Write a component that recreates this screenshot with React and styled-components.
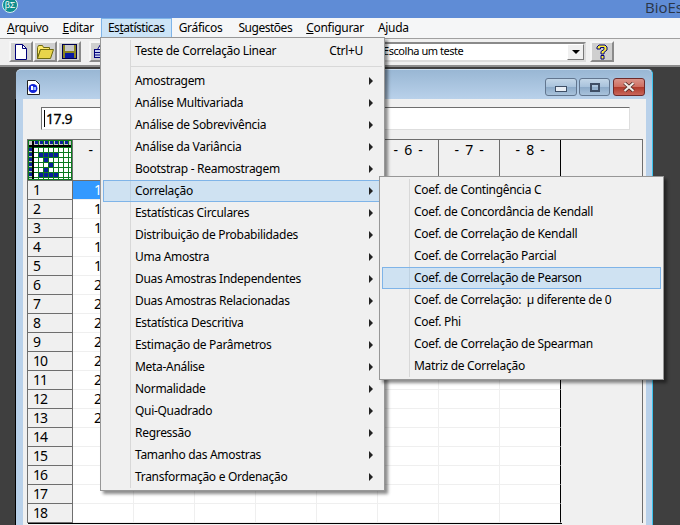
import styled, { createGlobalStyle } from "styled-components";

const GlobalStyle = createGlobalStyle`
  html, body {
    margin: 0;
    padding: 0;
    background: #3f3f3f;
  }
  * {
    box-sizing: border-box;
  }
`;

const Screen = styled.div`
  position: relative;
  width: 680px;
  height: 525px;
  overflow: hidden;
  display: flex;
  flex-direction: column;
  font-family: "Noto Sans", sans-serif;
  font-size: 12px;
  letter-spacing: -0.3px;
  color: #000;
`;

const TitleBar = styled.div`
  height: 18px;
  flex: none;
  background: #5f8cd6;
  overflow: hidden;
  position: relative;
  padding-left: 645px;
`;

const AppBadge = styled.div`
  position: absolute;
  left: 2px;
  top: -3px;
  width: 16px;
  height: 16px;
  border-radius: 50%;
  background: #0f8d8d;
  border: 1px solid #d8f0f0;
  color: #fff;
  font: 9px/14px "Liberation Sans", sans-serif;
  letter-spacing: 0;
  text-align: center;
`;

const TitleText = styled.div`
  font-family: "Open Sans", sans-serif;
  font-size: 15px;
  line-height: 15px;
  letter-spacing: 0;
  color: #2a3648;
  white-space: nowrap;
`;

const MenuBar = styled.div`
  height: 20px;
  flex: none;
  background: #f5f6f7;
  display: flex;
`;

const MenuTab = styled.div`
  height: 20px;
  line-height: 18px;
  padding: 0 6px;
  white-space: nowrap;
  letter-spacing: ${(p) => (p.$tight ? -0.47 : -0.3)}px;
  margin-right: ${(p) => p.$after || 0}px;
  border: 1px solid ${(p) => (p.$open ? "#7fb4e8" : "transparent")};
  background: ${(p) => (p.$open ? "#cce4f7" : "transparent")};
`;

const ToolBar = styled.div`
  height: 29px;
  flex: none;
  background: #f0f0f0;
  border-top: 1px solid #a0a0a0;
  border-bottom: 2px solid #8c8c8c;
  display: flex;
  align-items: flex-start;
  padding: 2px 0 0 9px;
`;

const ToolButton = styled.div`
  width: 24px;
  height: 21px;
  flex: none;
  margin-left: ${(p) => p.$gap || 0}px;
  background: #cfcfcf;
  border: 2px solid;
  border-color: #f6f6f6 #8a8a8a #8a8a8a #f6f6f6;
  display: flex;
  align-items: center;
  justify-content: center;
`;

const Combo = styled.div`
  width: 208px;
  height: 20px;
  flex: none;
  margin: 1px 0 0 265px;
  background: #fff;
  border: 2px solid;
  border-color: #8a8a8a #dcdcdc #dcdcdc #8a8a8a;
  display: flex;
  align-items: center;
  justify-content: space-between;
  padding-left: 3px;
`;

const ComboText = styled.span`
  font-size: 11px;
  letter-spacing: -0.45px;
  line-height: 14px;
  margin-bottom: 2px;
`;

const ComboArrow = styled.div`
  width: 17px;
  height: 16px;
  background: #f0f0f0;
  border: 1px solid;
  border-color: #fff #777 #777 #fff;
  display: flex;
  align-items: center;
  justify-content: center;
  &::after {
    content: "";
    border-left: 4px solid transparent;
    border-right: 4px solid transparent;
    border-top: 4px solid #000;
  }
`;

const Workspace = styled.div`
  flex: 1;
  background: #3f3f3f;
  padding: 2px 27px 0 16px;
  min-height: 0;
`;

const ChildWindow = styled.div`
  height: 100%;
  display: flex;
  flex-direction: column;
  border-radius: 5px 5px 0 0;
  border-right: 1px solid #3cc4ee;
  border-top: 1px solid #c9dcee;
  background: #b9d1ea;
`;

const Caption = styled.div`
  height: 29px;
  flex: none;
  border-radius: 5px 5px 0 0;
  background: linear-gradient(#99b7d4, #b9d1ea);
  display: flex;
  align-items: flex-start;
  padding: 8px 7px 0 11px;
  gap: 2px;
`;

const DocIcon = styled.svg`
  margin: 2px auto 0 0;
`;

const CaptionButton = styled.div`
  width: ${(p) => (p.$narrow ? 31 : 32)}px;
  height: 18px;
  margin-left: ${(p) => (p.$close ? 1 : 0)}px;
  border: 1px solid ${(p) => (p.$close ? "#6e2a2a" : "#62768f")};
  border-radius: 3px;
  background: ${(p) =>
    p.$close
      ? "linear-gradient(#d9948a 0%, #cf6f62 48%, #b03a2b 52%, #c9665a 100%)"
      : "linear-gradient(#c3d6e8 0%, #a9c3dc 48%, #8dabc9 52%, #a8c2db 100%)"};
  display: flex;
  align-items: center;
  justify-content: center;
`;

const Frame = styled.div`
  flex: 1;
  min-height: 0;
  padding: 0 6px 0 7px;
  box-shadow: -1px 0 0 #000;
`;

const Client = styled.div`
  height: 100%;
  background: #f0f0f0;
  padding: 8px 3px 0 4px;
  display: flex;
  flex-direction: column;
`;

const ValueBox = styled.div`
  width: 589px;
  height: 23px;
  flex: none;
  margin-left: 14px;
  background: #fff;
  border: 1px solid;
  border-color: #6e6e6e #dedede #dedede #6e6e6e;
  font-size: 14px;
  letter-spacing: -0.4px;
  -webkit-text-stroke: 0.3px #000;
  padding-left: 2px;
  display: flex;
  align-items: center;
  &::before {
    content: "";
    width: 1px;
    height: 17px;
    background: #000;
    margin-right: 1px;
  }
`;

const Sheet = styled.div`
  margin-top: 9px;
  flex: none;
  width: 616px;
  height: 384px;
  border-top: 1px solid #6e6e6e;
  border-left: 1px solid #6e6e6e;
  border-right: 1px solid #6e6e6e;
  font-size: 14px;
`;

const SheetRow = styled.div`
  display: flex;
  width: 533px;
  height: ${(p) => p.$h}px;
`;

const RowHead = styled.div`
  width: 45px;
  flex: none;
  background: #f0f0f0;
  border-right: 1px solid #6e6e6e;
  border-bottom: 1px solid #6e6e6e;
  line-height: 18px;
  letter-spacing: -1px;
  padding-left: 5px;
`;

const CornerHead = styled(RowHead)`
  padding: 0;
`;

const ColHead = styled.div`
  width: 61px;
  flex: none;
  background: #f0f0f0;
  border-right: 1px solid ${(p) => (p.$last ? "#000" : "#6e6e6e")};
  border-bottom: 1px solid #6e6e6e;
  text-align: center;
  word-spacing: 3px;
`;

const Cell = styled.div`
  width: 61px;
  flex: none;
  background: ${(p) => (p.$selected ? "#3399ff" : "#fff")};
  color: ${(p) => (p.$selected ? "#fff" : "#000")};
  border-right: 1px solid ${(p) => (p.$last ? "#000" : "#efefef")};
  border-bottom: 1px solid #efefef;
  line-height: 18px;
  padding-left: 21px;
`;

const BottomRule = styled.div`
  width: 534px;
  height: 1px;
  background: #000;
`;

const DropMenu = styled.div`
  position: absolute;
  left: ${(p) => p.$left}px;
  top: ${(p) => p.$top}px;
  width: ${(p) => p.$width}px;
  padding: 2px;
  background: linear-gradient(#d8d8d8, #d8d8d8) no-repeat 29px 2px / 1px calc(100% - 4px), #f0f0f0;
  border: 1px solid #979797;
  box-shadow: 3px 3px 3px rgba(0, 0, 0, 0.45);
  z-index: ${(p) => p.$z};
`;

const MenuRow = styled.div`
  height: 22px;
  display: flex;
  align-items: center;
  padding: 0 8px 2px 31px;
  white-space: pre;
  border: 1px solid ${(p) => (p.$active ? "#7fb4e8" : "transparent")};
  background: ${(p) => (p.$active ? "rgba(144, 200, 246, 0.34)" : "transparent")};
`;

const RowLabel = styled.span`
  flex: 1;
`;

const Shortcut = styled.span`
  margin-right: 10px;
`;

const SubArrow = styled.span`
  width: 0;
  height: 0;
  margin-top: 2px;
  border-left: 4px solid #222;
  border-top: 4px solid transparent;
  border-bottom: 4px solid transparent;
`;

const MenuRule = styled.div`
  height: 1px;
  margin: 3.5px 0 3.5px 28px;
  background: #d8d8d8;
`;

const TOPICS = [
  "Amostragem",
  "Análise Multivariada",
  "Análise de Sobrevivência",
  "Análise da Variância",
  "Bootstrap - Reamostragem",
  "Correlação",
  "Estatísticas Circulares",
  "Distribuição de Probabilidades",
  "Uma Amostra",
  "Duas Amostras Independentes",
  "Duas Amostras Relacionadas",
  "Estatística Descritiva",
  "Estimação de Parâmetros",
  "Meta-Análise",
  "Normalidade",
  "Qui-Quadrado",
  "Regressão",
  "Tamanho das Amostras",
  "Transformação e Ordenação",
];

const CORRELATIONS = [
  "Coef. de Contingência C",
  "Coef. de Concordância de Kendall",
  "Coef. de Correlação de Kendall",
  "Coef. de Correlação Parcial",
  "Coef. de Correlação de Pearson",
  "Coef. de Correlação:  µ diferente de 0",
  "Coef. Phi",
  "Coef. de Correlação de Spearman",
  "Matriz de Correlação",
];

const COL1 = ["1", "1", "1", "1", "1", "2", "2", "2", "2", "2", "2", "2", "2"];
const ROWS = Array.from({ length: 18 }, (_, i) => i + 1);
const COLS = [1, 2, 3, 4, 5, 6, 7, 8];

// little worksheet picture in the top left corner of the grid
const CornerIcon = () => {
  const sigma = [
    [2, 2], [3, 2], [4, 2], [5, 2],
    [3, 3], [4, 4], [3, 5],
    [2, 6], [3, 6], [4, 6], [5, 6],
  ];
  return (
    <svg width="44" height="40" viewBox="0 0 44 40" style={{ display: "block" }}>
      <rect width="44" height="40" fill="#fff" />
      <rect x="0" y="0" width="44" height="6" fill="#c4c4c4" />
      <rect x="0" y="0" width="5" height="40" fill="#c4c4c4" />
      {[5, 10, 15, 20, 25, 30, 35, 40].map((x) => (
        <rect key={x} x={x} y="0" width="1" height="40" fill="#0b7a1e" />
      ))}
      {[7, 12, 17, 22, 27, 32, 37].map((y) => (
        <rect key={y} x="0" y={y} width="44" height="1" fill="#0b7a1e" />
      ))}
      <rect x="0" y="5" width="44" height="2" fill="#000" />
      <rect x="4" y="0" width="2" height="40" fill="#000" />
      {[7, 12, 17, 22, 27, 32, 37].map((x) => (
        <rect key={x} x={x} y="1" width="3" height="3" fill="#0a1e9a" />
      ))}
      {[8, 13, 18, 23, 28, 33].map((y) => (
        <rect key={y} x="1" y={y} width="3" height="3" fill="#0a1e9a" />
      ))}
      {sigma.map(([c, r]) => (
        <rect key={`${c}-${r}`} x={1 + c * 5} y={3 + r * 5} width="4" height="4" fill="#0a1e9a" />
      ))}
      <rect x="0.5" y="0.5" width="43" height="39" fill="none" stroke="#0b7a1e" />
    </svg>
  );
};

const NewIcon = () => (
  <svg width="14" height="16" viewBox="0 0 14 16">
    <path d="M1.5 .5h7l4 4v11h-11z" fill="#fff" stroke="#00007a" />
    <path d="M8.5 .5v4h4" fill="none" stroke="#00007a" />
  </svg>
);

const FolderIcon = () => (
  <svg width="17" height="14" viewBox="0 0 17 14">
    <path d="M.5 2.5l1-2h4l1 2h6v2h-9l-3 9z" fill="#ffe96a" stroke="#6e6a10" />
    <path d="M.5 13.5l3-9h13l-3 9z" fill="#e8d44a" stroke="#6e6a10" />
  </svg>
);

const SaveIcon = () => (
  <svg width="15" height="15" viewBox="0 0 15 15">
    <rect x=".5" y=".5" width="14" height="14" fill="#8a8420" stroke="#000050" />
    <rect x="3" y="1" width="9" height="6" fill="#c9c9c9" />
    <rect x="3" y="9" width="9" height="5" fill="#0a1aa0" />
  </svg>
);

const PrintIcon = () => (
  <svg width="15" height="15" viewBox="0 0 15 15">
    <path d="M3.5 5.5l3-5h5l-3 5z" fill="#fff" stroke="#00007a" />
    <rect x=".5" y="5.5" width="14" height="8" fill="#c8d0f0" stroke="#00007a" />
    <path d="M1 8.5h13M1 11h13" stroke="#00007a" />
  </svg>
);

const HelpIcon = () => (
  <svg width="12" height="16" viewBox="0 0 12 16">
    <path
      d="M1 5V3l2-2h6l2 2v3L8 8.500V10H5V7.500L8 5.500V3.500H4.500V5zM5 11.500h3V15H5z"
      fill="#ffef3a"
      stroke="#00007a"
    />
  </svg>
);

const SmallDocIcon = () => (
  <DocIcon width="13" height="15" viewBox="0 0 13 15">
    <path d="M.5.500h8l4 4v10H.5z" fill="#fff" stroke="#222" />
    <circle cx="6" cy="8.500" r="4.500" fill="#1426d8" />
    <rect x="4" y="6" width="2" height="4" fill="#fff" />
    <rect x="6.500" y="7" width="2.500" height="3" fill="#9fc0ff" />
  </DocIcon>
);

const MinGlyph = () => (
  <svg width="12" height="6" viewBox="0 0 12 6" style={{ marginTop: 4 }}>
    <rect x=".5" y=".5" width="11" height="5" fill="#e8eef5" stroke="#3f4f66" />
  </svg>
);

const MaxGlyph = () => (
  <svg width="10" height="9" viewBox="0 0 10 9">
    <rect x="1" y="1" width="8" height="7" fill="none" stroke="#3f4f66" strokeWidth="2" />
  </svg>
);

const CloseGlyph = () => (
  <svg width="12" height="10" viewBox="0 0 12 10">
    <path d="M1.500 1l9 8M10.500 1l-9 8" stroke="#4a2420" strokeWidth="3.600" />
    <path d="M1.500 1l9 8M10.500 1l-9 8" stroke="#f2ece8" strokeWidth="2.200" />
  </svg>
);

const App = () => {
  return (
    <Screen>
      <GlobalStyle />
      <TitleBar>
        <AppBadge>βΣ</AppBadge>
        <TitleText>BioEstat</TitleText>
      </TitleBar>

      <MenuBar>
        <MenuTab><u>A</u>rquivo</MenuTab>
        <MenuTab><u>E</u>ditar</MenuTab>
        <MenuTab $open $tight>Es<u>t</u>atísticas</MenuTab>
        <MenuTab $after={2}>Gráficos</MenuTab>
        <MenuTab $tight>Sugestões</MenuTab>
        <MenuTab><u>C</u>onfigurar</MenuTab>
        <MenuTab>A<u>j</u>uda</MenuTab>
      </MenuBar>

      <ToolBar>
        <ToolButton><NewIcon /></ToolButton>
        <ToolButton><FolderIcon /></ToolButton>
        <ToolButton><SaveIcon /></ToolButton>
        <ToolButton $gap={8}><PrintIcon /></ToolButton>
        <Combo>
          <ComboText>Escolha um teste</ComboText>
          <ComboArrow />
        </Combo>
        <ToolButton $gap={4}><HelpIcon /></ToolButton>
      </ToolBar>

      <Workspace>
        <ChildWindow>
          <Caption>
            <SmallDocIcon />
            <CaptionButton><MinGlyph /></CaptionButton>
            <CaptionButton $narrow><MaxGlyph /></CaptionButton>
            <CaptionButton $close><CloseGlyph /></CaptionButton>
          </Caption>
          <Frame>
            <Client>
              <ValueBox>17.9</ValueBox>
              <Sheet>
                <SheetRow $h={41}>
                  <CornerHead><CornerIcon /></CornerHead>
                  {COLS.map((c) => (
                    <ColHead key={c} $last={c === 8}>- {c} -</ColHead>
                  ))}
                </SheetRow>
                {ROWS.map((r) => (
                  <SheetRow key={r} $h={19}>
                    <RowHead>{r}</RowHead>
                    {COLS.map((c) => (
                      <Cell key={c} $last={c === 8} $selected={c === 1 && r === 1}>
                        {c === 1 ? COL1[r - 1] : ""}
                      </Cell>
                    ))}
                  </SheetRow>
                ))}
                <BottomRule />
              </Sheet>
            </Client>
          </Frame>
        </ChildWindow>
      </Workspace>

      <DropMenu $left={100} $top={37} $width={285} $z={2}>
        <MenuRow>
          <RowLabel>Teste de Correlação Linear</RowLabel>
          <Shortcut>Ctrl+U</Shortcut>
        </MenuRow>
        <MenuRule />
        {TOPICS.map((t) => (
          <MenuRow key={t} $active={t === "Correlação"}>
            <RowLabel>{t}</RowLabel>
            <SubArrow />
          </MenuRow>
        ))}
      </DropMenu>

      <DropMenu $left={379} $top={176} $width={285} $z={3}>
        {CORRELATIONS.map((t) => (
          <MenuRow key={t} $active={t.endsWith("Pearson")}>
            <RowLabel>{t}</RowLabel>
          </MenuRow>
        ))}
      </DropMenu>
    </Screen>
  );
};

export default App;
